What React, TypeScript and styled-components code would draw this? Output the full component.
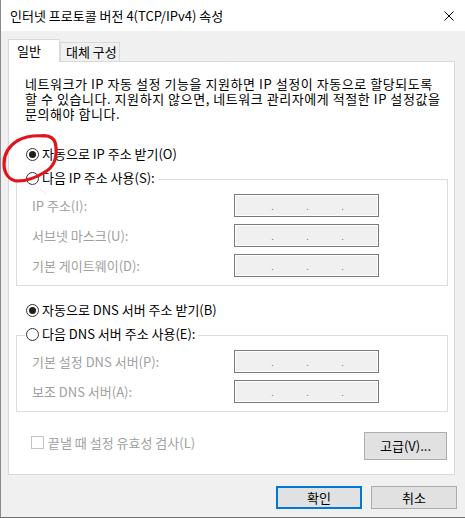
import React from 'react'
import styled, { createGlobalStyle } from 'styled-components'

const GlobalStyle = createGlobalStyle`
  html, body {
    margin: 0;
    padding: 0;
    background: #f0f0f0;
  }
  body {
    font-family: "Noto Sans CJK KR", "Noto Sans", sans-serif;
    font-size: 13px;
    color: #000;
  }
`

const Window = styled.div`
  position: relative;
  width: 465px;
  height: 518px;
  box-sizing: border-box;
  background: #f0f0f0;
  border-left: 1px solid #8a8a8a;
  border-bottom: 1px solid #6f6f6f;
  display: flex;
  flex-direction: column;
`

const TitleBar = styled.div`
  flex: none;
  height: 31px;
  background: #fff;
  display: flex;
  align-items: center;
  justify-content: space-between;
  padding: 0 11px 0 9px;
  font-size: 13px;
  line-height: 16px;
`

const Body = styled.div`
  flex: 1;
  display: flex;
  flex-direction: column;
  padding: 8px 8px 0 7px;
`

const TabStrip = styled.div`
  position: relative;
  z-index: 1;
  height: 22px;
  display: flex;
  align-items: flex-end;
`

const Tab = styled.div<{ $active?: boolean }>`
  box-sizing: border-box;
  display: flex;
  align-items: center;
  height: ${({ $active }) => ($active ? 23 : 19)}px;
  width: ${({ $active }) => ($active ? 52 : 60)}px;
  margin-bottom: ${({ $active }) => ($active ? -1 : 0)}px;
  padding-left: ${({ $active }) => ($active ? 8 : 5)}px;
  border: 1px solid #d9d9d9;
  border-bottom: none;
  background: ${({ $active }) => ($active ? '#fff' : '#f0f0f0')};
  line-height: 16px;
`

const Panel = styled.div`
  flex: none;
  box-sizing: border-box;
  height: 414px;
  margin-right: 2px;
  border: 1px solid #d9d9d9;
  background: #fff;
  display: flex;
  flex-direction: column;
  padding: 0 6px 0 7px;
`

const Intro = styled.p`
  margin: 14px 0 0 9px;
  line-height: 15px;
  letter-spacing: 0.55px;
`

const RadioRow = styled.div<{ $mt?: number }>`
  display: flex;
  align-items: center;
  gap: 3px;
  height: 16px;
  margin-top: ${({ $mt }) => $mt ?? 0}px;
  padding-left: 10px;
  line-height: 16px;
  white-space: nowrap;
`

const Radio = styled.span<{ $checked?: boolean }>`
  flex: none;
  box-sizing: border-box;
  width: 13px;
  height: 13px;
  border: 1px solid #333;
  border-radius: 50%;
  background: #fff;
  display: flex;
  align-items: center;
  justify-content: center;
  &::after {
    content: '';
    width: 7px;
    height: 7px;
    border-radius: 50%;
    background: ${({ $checked }) => ($checked ? '#1f1f1f' : 'transparent')};
  }
`

const Group = styled.fieldset<{ $mt?: number }>`
  min-width: 0;
  margin: ${({ $mt }) => $mt ?? 0}px 0 0 0;
  padding: 5px 0 8px 15px;
  border: 1px solid #dcdcdc;
  display: flex;
  flex-direction: column;
  gap: 7px;
`

const Legend = styled.legend`
  height: 19px;
  margin-left: -7px;
  padding: 0 3px 0 1px;
  & > ${RadioRow} {
    padding-left: 0;
  }
`

const FieldRow = styled.div`
  display: flex;
  align-items: center;
  height: 23px;
`

const FieldLabel = styled.span`
  width: 202px;
  color: #a0a0a0;
  line-height: 16px;
  white-space: nowrap;
`

const IpField = styled.div`
  box-sizing: border-box;
  width: 145px;
  height: 23px;
  border: 1px solid #7a7a7a;
  box-shadow: inset 0 0 0 1px #fff;
  background: #f0f0f0;
  display: flex;
  align-items: flex-start;
  gap: 32px;
  padding: 7px 0 0 36px;
`

const IpDot = styled.span`
  width: 3px;
  font-size: 9px;
  line-height: 9px;
  text-align: center;
  color: #7f7f7f;
`

const BottomRow = styled.div`
  display: flex;
  justify-content: space-between;
  align-items: flex-start;
  margin-top: 20px;
  padding: 0 1px 0 15px;
`

const CheckLabel = styled.label`
  display: flex;
  align-items: center;
  gap: 4px;
  margin-top: 4px;
  color: #a0a0a0;
  line-height: 13px;
`

const CheckBox = styled.span`
  flex: none;
  box-sizing: border-box;
  width: 13px;
  height: 13px;
  border: 1px solid #c4c4c4;
  background: #fff;
`

const Button = styled.button<{ $primary?: boolean; $w: number; $h: number }>`
  box-sizing: border-box;
  width: ${({ $w }) => $w}px;
  height: ${({ $h }) => $h}px;
  padding: 0;
  font: inherit;
  line-height: 16px;
  color: #000;
  background: #e1e1e1;
  border: ${({ $primary }) => ($primary ? '2px solid #0078d7' : '1px solid #adadad')};
`

const Footer = styled.div`
  display: flex;
  justify-content: flex-end;
  gap: 9px;
  margin-top: 11px;
`

const Scribble = styled.svg`
  position: absolute;
  left: -1px;
  top: 128px;
  pointer-events: none;
`

function IpBox() {
  return (
    <IpField>
      <IpDot>.</IpDot>
      <IpDot>.</IpDot>
      <IpDot>.</IpDot>
    </IpField>
  )
}

export default function App() {
  return (
    <>
      <GlobalStyle />
      <Window>
        <TitleBar>
          <span>인터넷 프로토콜 버전 4(TCP/IPv4) 속성</span>
          <svg width="10" height="10" viewBox="0 0 10 10">
            <path d="M0.5 0.5 L9.5 9.5 M9.5 0.5 L0.5 9.5" stroke="#000" strokeWidth="1" />
          </svg>
        </TitleBar>
        <Body>
          <TabStrip>
            <Tab $active>일반</Tab>
            <Tab>대체 구성</Tab>
          </TabStrip>
          <Panel>
            <Intro>
              네트워크가 IP 자동 설정 기능을 지원하면 IP 설정이 자동으로 할당되도록
              <br />할 수 있습니다. 지원하지 않으면, 네트워크 관리자에게 적절한 IP 설정값을
              <br />문의해야 합니다.
            </Intro>

            <RadioRow $mt={25}>
              <Radio $checked />
              자동으로 IP 주소 받기(O)
            </RadioRow>
            <Group $mt={8}>
              <Legend>
                <RadioRow>
                  <Radio />
                  다음 IP 주소 사용(S):
                </RadioRow>
              </Legend>
              <FieldRow>
                <FieldLabel>IP 주소(I):</FieldLabel>
                <IpBox />
              </FieldRow>
              <FieldRow>
                <FieldLabel>서브넷 마스크(U):</FieldLabel>
                <IpBox />
              </FieldRow>
              <FieldRow>
                <FieldLabel>기본 게이트웨이(D):</FieldLabel>
                <IpBox />
              </FieldRow>
            </Group>

            <RadioRow $mt={16}>
              <Radio $checked />
              자동으로 DNS 서버 주소 받기(B)
            </RadioRow>
            <Group $mt={8}>
              <Legend>
                <RadioRow>
                  <Radio />
                  다음 DNS 서버 주소 사용(E):
                </RadioRow>
              </Legend>
              <FieldRow>
                <FieldLabel>기본 설정 DNS 서버(P):</FieldLabel>
                <IpBox />
              </FieldRow>
              <FieldRow>
                <FieldLabel>보조 DNS 서버(A):</FieldLabel>
                <IpBox />
              </FieldRow>
            </Group>

            <BottomRow>
              <CheckLabel>
                <CheckBox />
                끝낼 때 설정 유효성 검사(L)
              </CheckLabel>
              <Button $w={83} $h={28}>고급(V)...</Button>
            </BottomRow>
          </Panel>
          <Footer>
            <Button $primary $w={86} $h={23}>확인</Button>
            <Button $w={86} $h={23}>취소</Button>
          </Footer>
        </Body>

        {/* red marker circle drawn over the first radio button */}
        <Scribble width="70" height="75" viewBox="0 0 70 75">
          <path
            d="M40 8 C50 6, 56 11, 56 20 C57 32, 52 40, 45 44 C37 49, 27 53, 18 53 C9 53, 4 45, 4 36 C4 26, 9 18, 17 13 C24 9, 32 7, 44 8"
            fill="none"
            stroke="#e3121b"
            strokeWidth="3.2"
            strokeLinecap="round"
          />
          <path d="M33 56 L46 66" stroke="#f4a6b0" strokeWidth="1" strokeDasharray="1 2" opacity="0.7" />
        </Scribble>
      </Window>
    </>
  )
}
